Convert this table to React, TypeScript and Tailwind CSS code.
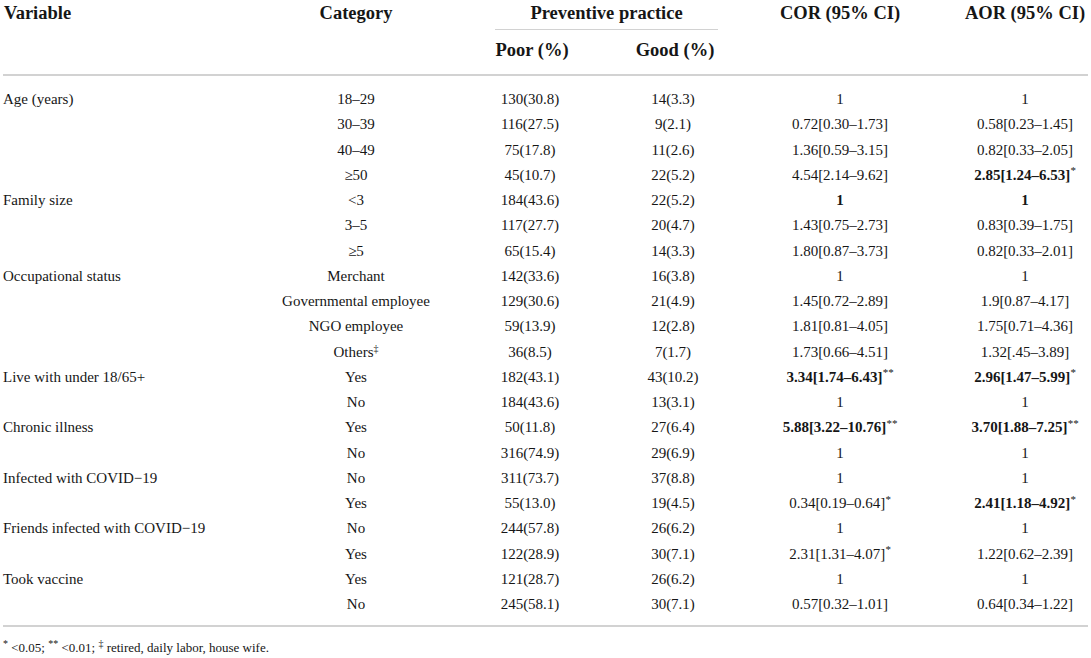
import React from "react";

type Cell = string | { v: string; b?: boolean; s?: string };

const rows: [string, string, string, string, Cell, Cell][] = [
  ["Age (years)", "18–29", "130(30.8)", "14(3.3)", "1", "1"],
  ["", "30–39", "116(27.5)", "9(2.1)", "0.72[0.30–1.73]", "0.58[0.23–1.45]"],
  ["", "40–49", "75(17.8)", "11(2.6)", "1.36[0.59–3.15]", "0.82[0.33–2.05]"],
  ["", "≥50", "45(10.7)", "22(5.2)", "4.54[2.14–9.62]", { v: "2.85[1.24–6.53]", b: true, s: "*" }],
  ["Family size", "<3", "184(43.6)", "22(5.2)", { v: "1", b: true }, { v: "1", b: true }],
  ["", "3–5", "117(27.7)", "20(4.7)", "1.43[0.75–2.73]", "0.83[0.39–1.75]"],
  ["", "≥5", "65(15.4)", "14(3.3)", "1.80[0.87–3.73]", "0.82[0.33–2.01]"],
  ["Occupational status", "Merchant", "142(33.6)", "16(3.8)", "1", "1"],
  ["", "Governmental employee", "129(30.6)", "21(4.9)", "1.45[0.72–2.89]", "1.9[0.87–4.17]"],
  ["", "NGO employee", "59(13.9)", "12(2.8)", "1.81[0.81–4.05]", "1.75[0.71–4.36]"],
  ["", "Others‡", "36(8.5)", "7(1.7)", "1.73[0.66–4.51]", "1.32[.45–3.89]"],
  ["Live with under 18/65+", "Yes", "182(43.1)", "43(10.2)", { v: "3.34[1.74–6.43]", b: true, s: "**" }, { v: "2.96[1.47–5.99]", b: true, s: "*" }],
  ["", "No", "184(43.6)", "13(3.1)", "1", "1"],
  ["Chronic illness", "Yes", "50(11.8)", "27(6.4)", { v: "5.88[3.22–10.76]", b: true, s: "**" }, { v: "3.70[1.88–7.25]", b: true, s: "**" }],
  ["", "No", "316(74.9)", "29(6.9)", "1", "1"],
  ["Infected with COVID−19", "No", "311(73.7)", "37(8.8)", "1", "1"],
  ["", "Yes", "55(13.0)", "19(4.5)", { v: "0.34[0.19–0.64]", s: "*" }, { v: "2.41[1.18–4.92]", b: true, s: "*" }],
  ["Friends infected with COVID−19", "No", "244(57.8)", "26(6.2)", "1", "1"],
  ["", "Yes", "122(28.9)", "30(7.1)", { v: "2.31[1.31–4.07]", s: "*" }, "1.22[0.62–2.39]"],
  ["Took vaccine", "Yes", "121(28.7)", "26(6.2)", "1", "1"],
  ["", "No", "245(58.1)", "30(7.1)", "0.57[0.32–1.01]", "0.64[0.34–1.22]"],
];

const cols = "grid grid-cols-[233px_240px_108px_176px_160px_168px]";

const renderCell = (c: Cell) => {
  if (typeof c === "string") return c;
  return (
    <span className="whitespace-nowrap">
      <span className={c.b ? "font-bold" : ""}>{c.v}</span>
      {c.s && <sup className="text-[11px] font-normal">{c.s}</sup>}
    </span>
  );
};

const renderCategory = (s: string) => {
  if (s.endsWith("‡")) {
    return (
      <span>
        {s.slice(0, -1)}
        <sup className="text-[10px]">‡</sup>
      </span>
    );
  }
  return s;
};

export default function App() {
  return (
    <div className="w-[1091px] h-[658px] bg-white text-[#161616] font-['Liberation_Serif',serif] overflow-hidden">
      <div className="ml-[3px] w-[1085px]">
        {/* header */}
        <div className={`${cols} border-b-2 border-[#d2d2d2] text-[18.5px] font-bold`}>
          <div className="h-[30px] leading-[27px] pl-[1px]">Variable</div>
          <div className="h-[30px] leading-[27px] text-center">Category</div>
          <div className="col-span-2 h-[30px] pl-[19px] pr-[42px]">
            <div className="h-full leading-[27px] text-center border-b border-[#d2d2d2]">Preventive practice</div>
          </div>
          <div className="h-[30px] leading-[27px] text-center">COR (95% CI)</div>
          <div className="h-[30px] leading-[27px] text-center pl-[42px]">AOR (95% CI)</div>

          <div className="h-[44px]" />
          <div className="h-[44px]" />
          <div className="h-[44px] leading-[40px] text-center pl-[4px]">Poor (%)</div>
          <div className="h-[44px] leading-[40px] text-center pl-[6px]">Good (%)</div>
          <div className="h-[44px]" />
          <div className="h-[44px]" />
        </div>

        {/* body */}
        <div className="pt-[11px] pb-[8px] border-b-2 border-[#d2d2d2] text-[15px]">
          {rows.map((r, i) => (
            <div key={i} className={`${cols} h-[25.25px] leading-[25.25px]`}>
              <div className="whitespace-nowrap">{r[0]}</div>
              <div className="text-center whitespace-nowrap">{renderCategory(r[1])}</div>
              <div className="text-center">{r[2]}</div>
              <div className="text-center pl-[2px]">{r[3]}</div>
              <div className="text-center">{renderCell(r[4])}</div>
              <div className="text-center pl-[42px]">{renderCell(r[5])}</div>
            </div>
          ))}
        </div>

        {/* footnote */}
        <div className="pt-[13px] text-[13px] leading-[16px]">
          <sup className="text-[10px]">*</sup>
          {"  <0.05; "}
          <sup className="text-[10px]">**</sup>
          {"  <0.01; "}
          <sup className="text-[10px]">‡</sup>
          {" retired, daily labor, house wife."}
        </div>
      </div>
    </div>
  );
}
